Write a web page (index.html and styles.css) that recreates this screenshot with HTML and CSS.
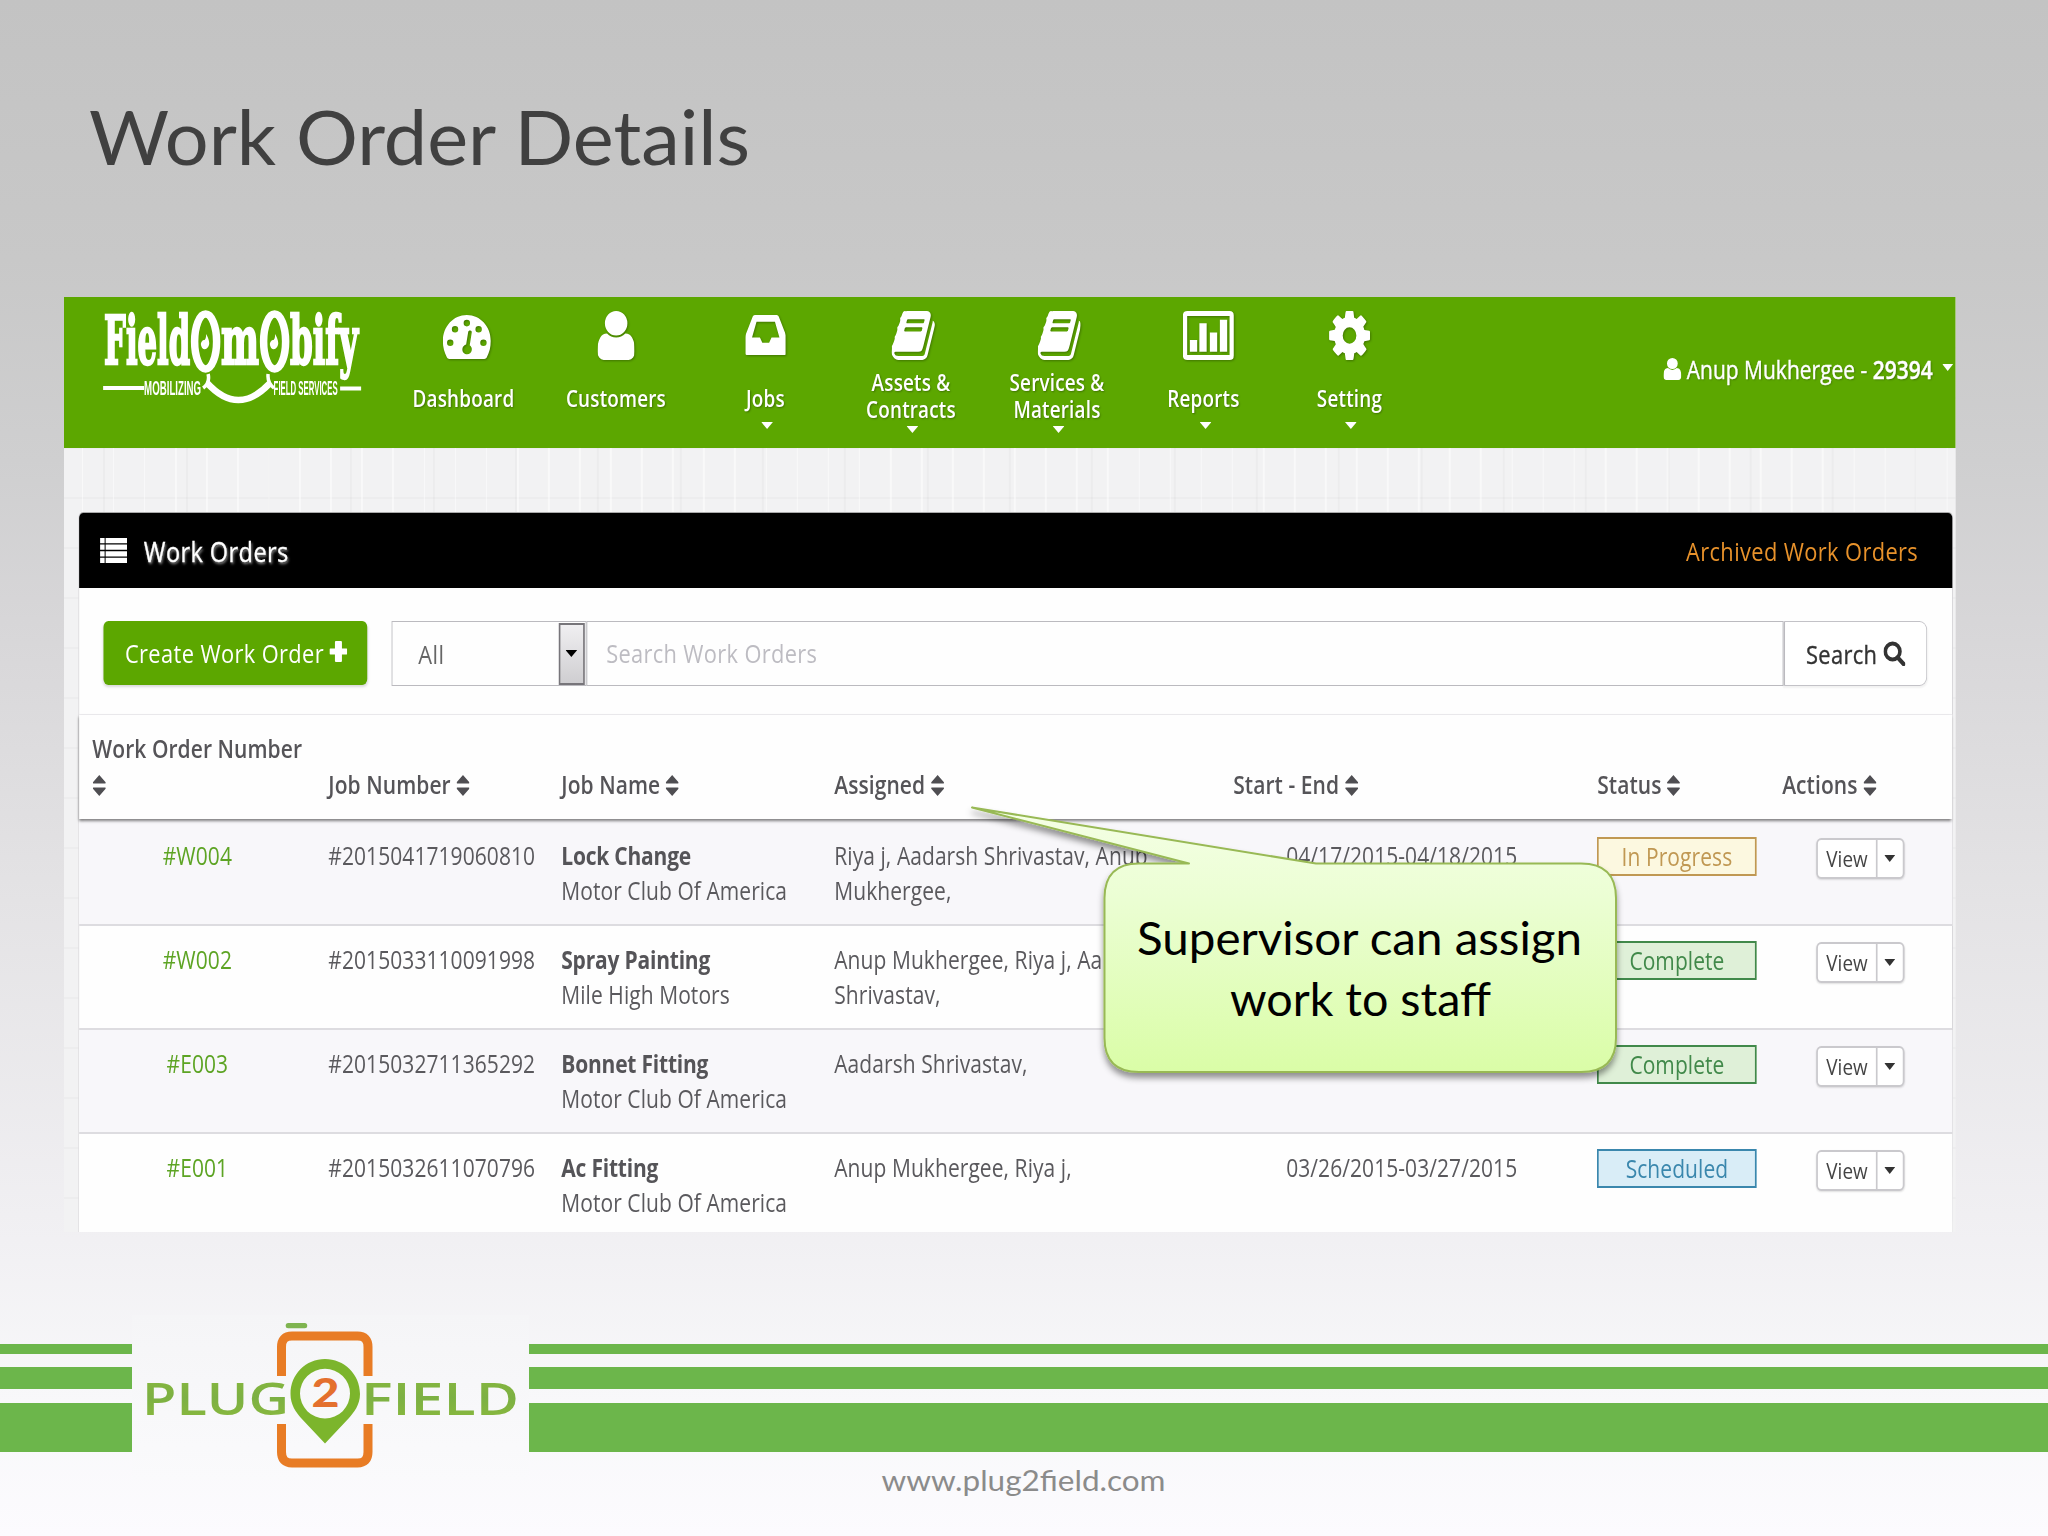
FILE: index.html
```html
<!DOCTYPE html>
<html lang="en">
<head>
<meta charset="utf-8">
<title>Work Order Details</title>
<link rel="stylesheet" href="styles.css">
</head>
<body>
<svg width="0" height="0" class="defs" aria-hidden="true">
  <symbol id="user" viewBox="256 128 1280 1536" preserveAspectRatio="none"><path d="M1536 1399q0 109-62.5 187t-150.5 78h-854q-88 0-150.5-78t-62.5-187q0-85 8.5-160.5t31.5-152 58.5-131 94-89 134.5-34.5q131 128 313 128t313-128q76 0 134.5 34.5t94 89 58.5 131 31.5 152 8.5 160.5zm-256-887q0 159-112.5 271.5t-271.5 112.5-271.5-112.5-112.5-271.5 112.5-271.5 271.5-112.5 271.5 112.5 112.5 271.5z"/></symbol>
  <symbol id="book" viewBox="64 128 1664 1536" preserveAspectRatio="none"><path d="M1703 478q40 57 18 129l-275 906q-19 64-76.5 107.5t-122.5 43.5h-923q-77 0-148.5-53.5t-99.5-131.5q-24-67-2-127 0-4 3-27t4-37q1-8-3-21.5t-3-19.5q2-11 8-21t16.5-23.5 16.5-23.5q23-38 45-91.5t30-91.5q3-10 .5-30t-.5-28q3-11 17-28t17-23q21-36 42-92t25-90q1-9-2.5-32t.5-28q4-13 22-30.5t22-22.5q19-26 42.5-84.5t27.5-96.5q1-8-3-25.5t-2-26.5q2-8 9-18t18-23 17-21q8-12 16.5-30.5t15-35 16-36 19.5-32 26.5-23.5 36-11.5 47.5 5.5l-1 3q38-9 51-9h761q74 0 114 56t18 130l-274 906q-36 119-71.5 153.5t-128.5 34.5h-869q-27 0-38 15-11 16-1 43 24 70 144 70h923q29 0 56-15.5t35-41.5l300-987q7-22 5-57 38 15 59 43zm-1064 2q-4 13 2 22.5t20 9.5h608q13 0 25.5-9.5t16.5-22.5l21-64q4-13-2-22.5t-20-9.5h-608q-13 0-25.5 9.5t-16.5 22.5zm-83 256q-4 13 2 22.5t20 9.5h608q13 0 25.5-9.5t16.5-22.5l21-64q4-13-2-22.5t-20-9.5h-608q-13 0-25.5 9.5t-16.5 22.5z"/></symbol>
  <symbol id="cog" viewBox="128 128 1536 1536" preserveAspectRatio="none"><path d="M1152 896q0-106-75-181t-181-75-181 75-75 181 75 181 181 75 181-75 75-181zm512-109v222q0 12-8 23t-20 13l-185 28q-19 54-39 91 35 50 107 138 10 12 10 25t-9 23q-27 37-99 108t-94 71q-12 0-26-9l-138-108q-44 23-91 38-16 136-29 186-7 28-36 28h-222q-14 0-24.5-8.5t-11.5-21.5l-28-184q-49-16-90-37l-141 107q-10 9-25 9-14 0-25-11-126-114-165-168-7-10-7-23 0-12 8-23 15-21 51-66.5t54-70.5q-27-50-41-99l-183-27q-13-2-21-12.5t-8-23.5v-222q0-12 8-23t19-13l186-28q14-46 39-92-40-57-107-138-10-12-10-24 0-10 9-23 26-36 98.5-107.5t94.5-71.5q13 0 26 10l138 107q44-23 91-38 16-136 29-186 7-28 36-28h222q14 0 24.5 8.5t11.5 21.5l28 184q49 16 90 37l142-107q9-9 24-9 13 0 25 10 129 119 165 170 7 8 7 22 0 12-8 23-15 21-51 66.5t-54 70.5q26 50 41 98l183 28q13 2 21 12.5t8 23.5z"/></symbol>
  <symbol id="gauge" viewBox="0 0 48 44" preserveAspectRatio="none"><path fill-rule="evenodd" d="M24 0C10.500 0 0 11.500 0 26c0 6.200 1.600 11.500 4 16.300.6 1.100 1.400 1.700 2.600 1.700h34.800c1.200 0 2-.6 2.600-1.700 2.400-4.800 4-10.100 4-16.300C48 11.500 37.500 0 24 0zM24 4.800a3.200 3.300 0 1 1 0 6.600 3.200 3.300 0 1 1 0-6.600zM12.200 11a3.200 3.300 0 1 1 0 6.600 3.200 3.300 0 1 1 0-6.600zM35.800 11a3.200 3.300 0 1 1 0 6.600 3.200 3.300 0 1 1 0-6.600zM7.400 24.500a3.200 3.300 0 1 1 0 6.600 3.200 3.300 0 1 1 0-6.600zM40.600 24.500a3.200 3.300 0 1 1 0 6.600 3.200 3.300 0 1 1 0-6.600zM27.400 15.500c1 .1 1.700.9 1.500 2L26.900 30.300c1.600 1.100 2.400 3 2 5-.5 2.700-2.900 4.400-5.500 3.900s-4.300-3.100-3.800-5.800c.4-2 1.900-3.400 3.700-3.900l2.100-12.700c.2-.9 1-1.500 2-1.300z"/></symbol>
  <symbol id="inbox" viewBox="0 0 41 40" preserveAspectRatio="none"><path fill-rule="evenodd" d="M7.500 1.500Q8 0 9.600 0h21.800q1.600 0 2.100 1.500L40.300 19q.7 1.800.7 3.500V38.600q0 1.400-1.300 1.400H1.300Q0 40 0 38.600V22.500Q0 20.800.7 19zM11.300 6.800 6.800 22.500h7.900l2.400 5.300h6.800l2.400-5.300h7.900L29.700 6.800z"/></symbol>
  <symbol id="chart" viewBox="0 0 51 48" preserveAspectRatio="none"><path fill-rule="evenodd" d="M4.500 0h42Q51 0 51 4.500v39q0 4.500-4.500 4.500h-42Q0 48 0 43.500v-39Q0 0 4.500 0zM4.300 4.800v38.400h42.400V4.800zM7 28.500h7.300V40H7zM16.500 12h7.300v28h-7.300zM27 21h7.300v19H27zM37 8.500h7.300V40H37z"/></symbol>
  <symbol id="caret" viewBox="0 0 12 7" preserveAspectRatio="none"><path d="M0 0h12L6 7z"/></symbol>
  <symbol id="sort" viewBox="0 0 14 21" preserveAspectRatio="none"><path d="M7 0 13.600 7.300Q14 8.500 13 8.500H1Q0 8.500.4 7.300zM7 21 .4 13.700Q0 12.500 1 12.500h12q1 0 .6 1.200z"/></symbol>
</svg>

<header class="title">
  <svg width="760" height="160" viewBox="60 60 760 160"><text class="slide-font" x="89" y="165" font-size="75" textLength="661" lengthAdjust="spacingAndGlyphs" fill="#404040">Work Order Details</text></svg>
</header>

<div class="stage">
<main class="app">
  <nav class="navbar">
    <svg class="brand" viewBox="100 305 264 105" preserveAspectRatio="none" fill="#fff">
      <g class="slab" font-size="67" stroke="#fff" stroke-width="2.400">
        <text x="104" y="364" textLength="86" lengthAdjust="spacingAndGlyphs">Field</text>
        <text x="221" y="364" textLength="38" lengthAdjust="spacingAndGlyphs">m</text>
        <text x="290" y="364" textLength="68" lengthAdjust="spacingAndGlyphs">bify</text>
      </g>
      <g fill="none" stroke="#fff" stroke-width="7.500">
        <ellipse cx="205.500" cy="341.500" rx="11" ry="27.500"/>
        <ellipse cx="274.500" cy="341.500" rx="11" ry="27.500"/>
        <path d="M207 383Q238 417 270 383" stroke-width="6.500"/>
        <path d="M208 374Q210 383 203 388M268 374Q267 383 274 388" stroke-width="3.500"/>
      </g>
      <path d="M206 334q5 9 2 13-3 4-6 1-3-5 1-8 3 1 3-6zM275 334q5 9 2 13-3 4-6 1-3-5 1-8 3 1 3-6z"/>
      <path d="M103 386h41v4h-41zM340 386.500h21v4h-21z"/>
      <g class="tag" font-size="21">
        <text x="144" y="395" textLength="57" lengthAdjust="spacingAndGlyphs">MOBILIZING</text>
        <text x="273.500" y="395" textLength="64" lengthAdjust="spacingAndGlyphs">FIELD SERVICES</text>
      </g>
    </svg>
    <ul class="menu">
      <li><svg class="i-gauge"><use href="#gauge"/></svg><span class="label">Dashboard</span></li>
      <li><svg class="i-user"><use href="#user"/></svg><span class="label">Customers</span></li>
      <li><svg class="i-inbox"><use href="#inbox"/></svg><span class="label">Jobs</span><svg class="caret"><use href="#caret"/></svg></li>
      <li class="two"><svg class="i-book"><use href="#book"/></svg><span class="label">Assets &amp;<br>Contracts</span><svg class="caret"><use href="#caret"/></svg></li>
      <li class="two"><svg class="i-book"><use href="#book"/></svg><span class="label">Services &amp;<br>Materials</span><svg class="caret"><use href="#caret"/></svg></li>
      <li><svg class="i-chart"><use href="#chart"/></svg><span class="label">Reports</span><svg class="caret"><use href="#caret"/></svg></li>
      <li><svg class="i-cog"><use href="#cog"/></svg><span class="label">Setting</span><svg class="caret"><use href="#caret"/></svg></li>
    </ul>
    <div class="account"><svg class="i-me"><use href="#user"/></svg><span>Anup Mukhergee - <b>29394</b></span><svg class="caret"><use href="#caret"/></svg></div>
  </nav>

  <section class="panel">
    <div class="panel-head">
      <svg class="i-list" viewBox="0 0 27 25" preserveAspectRatio="none" fill="#fff"><path d="M0 0h4.500v5.200H0zM5.500 0h21.500v5.200H5.500zM0 6.600h4.500v5.200H0zM5.500 6.600h21.500v5.200H5.500zM0 13.200h4.500v5.200H0zM5.500 13.200h21.500v5.200H5.500zM0 19.800h4.500V25H0zM5.500 19.800h21.500V25H5.500z"/></svg>
      <h2>Work Orders</h2>
      <a>Archived Work Orders</a>
    </div>
    <div class="toolbar">
      <button class="create">Create Work Order<svg class="i-plus" viewBox="0 0 18 21" preserveAspectRatio="none" fill="#fff"><path d="M6.500 0h5q1 0 1 1v6.500H17q1 0 1 1v4q0 1-1 1h-4.500V20q0 1-1 1h-5q-1 0-1-1v-6.500H1q-1 0-1-1v-4q0-1 1-1h4.500V1q0-1 1-1z"/></svg></button>
      <div class="select">All<span class="drop"><svg class="caret"><use href="#caret"/></svg></span></div>
      <div class="field">Search Work Orders</div>
      <button class="search">Search<svg class="i-search" viewBox="0 0 24 25" preserveAspectRatio="none"><circle cx="10" cy="10.500" r="8" fill="none" stroke="#333" stroke-width="4"/><path d="M15.500 16.500 22 23" stroke="#333" stroke-width="4.500" stroke-linecap="round"/></svg></button>
    </div>
    <div class="row head">
      <span>Work Order Number <svg class="sort"><use href="#sort"/></svg></span>
      <span>Job Number <svg class="sort"><use href="#sort"/></svg></span>
      <span>Job Name <svg class="sort"><use href="#sort"/></svg></span>
      <span>Assigned <svg class="sort"><use href="#sort"/></svg></span>
      <span>Start - End <svg class="sort"><use href="#sort"/></svg></span>
      <span>Status <svg class="sort"><use href="#sort"/></svg></span>
      <span>Actions <svg class="sort"><use href="#sort"/></svg></span>
    </div>
    <div class="row odd first">
      <a class="num">#W004</a><span>#2015041719060810</span><span><b>Lock Change</b><br>Motor Club Of America</span><span>Riya j, Aadarsh Shrivastav, Anup<br>Mukhergee,</span><span class="date">04/17/2015-04/18/2015</span><span class="badge progress">In Progress</span><span class="view"><i>View</i><svg class="caret"><use href="#caret"/></svg></span>
    </div>
    <div class="row">
      <a class="num">#W002</a><span>#2015033110091998</span><span><b>Spray Painting</b><br>Mile High Motors</span><span>Anup Mukhergee, Riya j, Aa<br>Shrivastav,</span><span class="date"></span><span class="badge complete">Complete</span><span class="view"><i>View</i><svg class="caret"><use href="#caret"/></svg></span>
    </div>
    <div class="row odd">
      <a class="num">#E003</a><span>#2015032711365292</span><span><b>Bonnet Fitting</b><br>Motor Club Of America</span><span>Aadarsh Shrivastav,</span><span class="date"></span><span class="badge complete">Complete</span><span class="view"><i>View</i><svg class="caret"><use href="#caret"/></svg></span>
    </div>
    <div class="row last">
      <a class="num">#E001</a><span>#2015032611070796</span><span><b>Ac Fitting</b><br>Motor Club Of America</span><span>Anup Mukhergee, Riya j,</span><span class="date">03/26/2015-03/27/2015</span><span class="badge scheduled">Scheduled</span><span class="view"><i>View</i><svg class="caret"><use href="#caret"/></svg></span>
    </div>
  </section>
</main>
</div>

<svg class="callout" viewBox="960 795 680 300">
  <defs>
    <linearGradient id="lime" gradientUnits="userSpaceOnUse" x1="0" y1="807" x2="0" y2="1072"><stop offset="0" stop-color="#f5ffe6"/><stop offset=".35" stop-color="#ebfed3"/><stop offset="1" stop-color="#dafda7"/></linearGradient>
    <filter id="drop" x="-5%" y="-5%" width="112%" height="115%"><feDropShadow dx="0" dy="5" stdDeviation="3" flood-color="#000" flood-opacity=".42"/></filter>
  </defs>
  <path filter="url(#drop)" fill="url(#lime)" stroke="#98b954" stroke-width="2" stroke-linejoin="round" d="M972 807.500 1316 863.500H1581Q1616 863.500 1616 898V1038Q1616 1072 1581 1072H1139Q1104.500 1072 1104.500 1038V898Q1104.500 863.500 1139 863.500H1189z"/>
  <g class="slide-font" font-size="46">
    <text x="1137" y="954.500" textLength="445" lengthAdjust="spacingAndGlyphs">Supervisor can assign</text>
    <text x="1230" y="1016" textLength="261" lengthAdjust="spacingAndGlyphs">work to staff</text>
  </g>
</svg>

<footer class="footer">
  <div class="bands">
    <div class="stripes"><i></i><i></i><i></i></div>
    <svg class="logo" viewBox="132 1315 397 165">
      <defs><linearGradient id="leaf" x1="0" y1="0" x2="0" y2="1"><stop offset="0" stop-color="#8cbb3c"/><stop offset=".5" stop-color="#7cb043"/><stop offset="1" stop-color="#8cbb3c"/></linearGradient></defs>
      <rect x="285.700" y="1323" width="21.500" height="5.200" rx="2.500" fill="#7fb450"/>
      <path fill="none" stroke="#e87c25" stroke-width="9" d="M281.500 1376V1347Q281.500 1336 292 1336H357.500Q368 1336 368 1347V1376M281.500 1424V1452Q281.500 1463 292 1463H357.500Q368 1463 368 1452V1424"/>
      <path fill="#7cb52c" fill-rule="evenodd" d="M325 1359C306 1359 290.500 1374 290.500 1394 290.500 1405 296 1412 301 1418L325 1443.500 349 1418C354 1412 360 1405 360 1394 360 1374 344 1359 325 1359zM325 1368.800a25 24.800 0 1 0 0 49.600 25 24.800 0 1 0 0-49.600z"/>
      <g class="plug" fill="url(#leaf)" font-size="44.500">
        <text x="142" y="1414.500" textLength="147" lengthAdjust="spacingAndGlyphs">PLUG</text>
        <text x="361" y="1414.500" textLength="158" lengthAdjust="spacingAndGlyphs">FIELD</text>
      </g>
      <text class="two-mark" x="311.500" y="1407" font-size="40" textLength="28" lengthAdjust="spacingAndGlyphs" fill="#e4702e">2</text>
    </svg>
    <div class="stripes"><i></i><i></i><i></i></div>
  </div>
  <svg class="site" width="400" height="70" viewBox="840 1460 400 70"><text class="slide-font" x="881.500" y="1490.500" font-size="29" textLength="284" lengthAdjust="spacingAndGlyphs" fill="#8b8b8b">www.plug2field.com</text></svg>
</footer>
</body>
</html>
```
FILE: styles.css
```css
:root { --k: .84; }
* { box-sizing: border-box; }
body {
  position: relative;
  width: 2048px; height: 1536px; margin: 0; overflow: hidden;
  background: linear-gradient(#c3c3c3 0, #c8c8c8 260px, #cfcfd0 460px, #d7d6d8 620px, #e4e3e5 900px, #f1f0f3 1240px, #f8f8fa 1400px, #fcfbfe 1536px);
  font-family: "Open Sans", sans-serif;
}
.defs { display: block; position: absolute; }
.slide-font { font-family: Lato, sans-serif; }
.title { height: 297px; padding: 60px 0 0 60px; }
.title svg { display: block; }
svg { flex: none; }

/* The application is laid out at full width, then squeezed horizontally */
.stage { width: 1892px; height: 935px; margin-left: 64px; overflow: hidden; }
.app {
  width: calc(1892px / var(--k)); height: 935px;
  transform: scaleX(var(--k)); transform-origin: 0 0;
  overflow: hidden;
  background:
    repeating-linear-gradient(90deg, transparent 0 47px, rgba(0,0,0,.022) 47px 49px, transparent 49px 98px),
    repeating-linear-gradient(90deg, transparent 0 21px, rgba(255,255,255,.5) 21px 23px, transparent 23px 37px),
    repeating-linear-gradient(0deg, transparent 0 33px, rgba(0,0,0,.02) 33px 35px, transparent 35px 50px),
    #f2f2f3;
}
.navbar {
  display: flex; height: 151px; background: #5ca700; color: #fff; fill: #fff;
}
.brand { overflow: visible; width: calc(264px / var(--k)); height: 105px; margin: 8px calc(24px / var(--k)) 0 calc(36px / var(--k)); }
.slab { font-family: "DejaVu Serif Condensed", "DejaVu Serif", serif; font-weight: 700; }
.tag { font-family: "Liberation Sans", sans-serif; font-weight: 700; }
.menu {
  display: grid; grid-template-columns: 151fr 154fr 145fr 146fr 146fr 147fr 145fr;
  width: calc(1034px / var(--k)); margin: 0; padding: 0; list-style: none;
}
.menu li { display: flex; flex-direction: column; align-items: center; padding-top: 14px; }
.menu li > svg:first-child { filter: drop-shadow(1px 1px 1px rgba(0,0,0,.3)); }
.label {
  margin-top: 26px; font-size: 22.5px; font-weight: 600; line-height: 26.500px; text-align: center; letter-spacing: .2px;
  text-shadow: 1px 1px 2px rgba(0,0,0,.3); white-space: nowrap;
}
.two .label { margin-top: 10px; }
.caret { width: 14px; height: 7px; }
.menu .caret { margin: 9px 0 0 4px; }
.menu .two .caret { margin-top: 3px; }
.i-gauge { width: calc(48px / var(--k)); height: 44px; margin: 4px 0 1px 9px; }
.i-user { width: calc(37.5px / var(--k)); height: 49px; }
.i-inbox { width: calc(41px / var(--k)); height: 40px; margin: 4px 0 5px; }
.i-book { width: calc(43.5px / var(--k)); height: 49px; margin-left: 5px; }
.i-chart { width: calc(51px / var(--k)); height: 49px; margin-left: 12px; }
.i-cog { width: calc(41px / var(--k)); height: 49px; }
.account {
  display: flex; align-items: center; margin-left: auto; padding: 0 calc(3px / var(--k)) 8px 0;
  font-size: 25px; white-space: nowrap; text-shadow: 1px 1px 2px rgba(0,0,0,.3); -webkit-text-stroke: .4px #fff;
}
.account b { font-weight: 600; }
.account .caret { margin: -2px 0 0 11px; width: 13px; }
.i-me { width: calc(18px / var(--k)); height: 22px; margin-right: 6px; }

.panel {
  width: calc(1875px / var(--k)); height: 721px;
  margin: 64px 0 0 calc(14px / var(--k));
  border: 1px solid #c9c8cc; border-top-color: #aaa; border-bottom: 0;
  border-radius: 6px 6px 0 0; background: #fefefe;
}
.panel-head {
  display: flex; align-items: center; height: 75px; padding: 0 calc(34px / var(--k)) 0 calc(21px / var(--k));
  border-radius: 5px 5px 0 0; background: #000; color: #fff;
}
.i-list { width: calc(27px / var(--k)); height: 25px; }
h2 { margin: 0 auto 0 calc(17px / var(--k)); font-size: 28px; font-weight: 400; letter-spacing: .5px; text-shadow: 1px 2px 3px rgba(255,255,255,.6); -webkit-text-stroke: .3px #fff; }
.panel-head a { color: #e8922b; font-size: 26px; letter-spacing: .45px; }
.toolbar {
  display: flex; align-items: flex-start; height: 127px; padding: 33px calc(25px / var(--k)) 0;
  border-bottom: 1px solid #eeedf0;
}
button { font-family: inherit; font-size: 26px; letter-spacing: .45px; }
.create {
  display: flex; align-items: center; justify-content: center; height: 64px;
  width: calc(263.500px / var(--k)); margin-right: calc(24px / var(--k)); padding: 0 0 0 1px;
  border: 0; border-radius: 6px; background: #5ca700; color: #fff; box-shadow: 0 2px 3px rgba(0,0,0,.15);
}
.i-plus { width: calc(18px / var(--k)); height: 21px; margin: -4px 0 0 6px; }
.select {
  display: flex; align-items: center; justify-content: space-between; height: 65px;
  width: calc(195px / var(--k)); padding: 0 1px 0 calc(26px / var(--k));
  border: 1px solid #bbbabf; color: #666; font-size: 26px; line-height: 66px; letter-spacing: .6px;
}
.drop {
  display: flex; align-items: center; justify-content: center; width: calc(26px / var(--k)); height: 62px;
  border: 2px solid #77757a; background: linear-gradient(#f0eff1, #cfced1); fill: #000;
}
.field {
  flex: 1; height: 65px; padding-left: calc(19px / var(--k)); border: 1px solid #bbbabf;
  color: #bdbcc2; font-size: 26px; line-height: 63px; letter-spacing: .4px;
}
.search {
  display: flex; align-items: center; justify-content: center; height: 65px; width: calc(144px / var(--k)); padding: 0;
  border: 1px solid #c3c2c7; border-left: 2px solid #bbbabf; border-radius: 0 9px 9px 0; background: #fff; color: #333;
  box-shadow: 0 2px 2px rgba(0,0,0,.05); -webkit-text-stroke: .4px #333;
}
.i-search { width: calc(22px / var(--k)); height: 25px; margin-left: 7px; }

.row {
  display: grid; grid-template-columns: 236fr 233fr 273fr 399fr 364fr 185fr 170fr; align-items: start;
  height: 104px; padding: 16px 0 0 calc(13.500px / var(--k));
  border-bottom: 2px solid #dddce0; color: #5a595d; font-size: 25px; line-height: 35.300px; letter-spacing: .08px; white-space: nowrap;
}
.row b { font-weight: 700; color: #555458; letter-spacing: -.25px; }
.head {
  position: relative; height: 104px; align-items: end; padding: 0 0 17px calc(13.500px / var(--k)); border-bottom: 0;
  background: #fefefe; box-shadow: 0 2px 3px rgba(0,0,0,.5); color: #555458; font-weight: 600;
}
.head span:first-child { white-space: normal; width: 260px; }
.sort { width: 16px; height: 21px; margin-left: 0; vertical-align: -2px; fill: #4f4e52; }
.odd { background: #f8f7fa; }
.first { height: 107px; padding-top: 19px; }
.last { border: 0; background: #fefefe; }
.num { text-align: center; color: #5da424; padding-right: calc(26px / var(--k)); }
.date { text-align: center; padding-right: calc(27px / var(--k)); }
.badge {
  width: calc(159.500px / var(--k)); height: 39px; margin-top: -1px; border: 2px solid; text-align: center; line-height: 35px; font-size: 25px;
}
.progress { color: #c09853; background: #fcf8e0; }
.complete { color: #41894a; background: #dff0d8; }
.scheduled { color: #3a87ad; background: #d9edf7; }
.view {
  display: flex; align-items: center; width: calc(88px / var(--k)); height: 41px; margin: 0 0 0 calc(34px / var(--k));
  border: 2px solid #cac9cd; border-radius: 6px; background: #fff; color: #444; fill: #333;
  font-size: 22.500px; line-height: 38px; box-shadow: 0 1px 2px rgba(0,0,0,.12);
}
.view i { width: calc(60px / var(--k)); font-style: normal; text-align: center; border-right: 2px solid #cac9cd; }
.view .caret { width: 13px; margin: 0 auto; }

.callout { position: absolute; left: 960px; top: 795px; width: 680px; height: 300px; }

.footer { height: 304px; padding-top: 83px; }
.bands { display: grid; grid-template-columns: 132px 397px 1fr; height: 165px; }
.logo { width: 397px; height: 165px; background: linear-gradient(#f5f5f7, #fafafc); }
.stripes { display: grid; grid-template-rows: 10px 22.500px 50.500px; row-gap: 12.500px; padding-top: 29px; align-content: start; }
.stripes i { background: #6cb64b; }
.stripes i:last-child { margin-top: 1px; }
.plug { font-family: "Open Sans", sans-serif; font-weight: 600; }
.two-mark { font-family: Lato, sans-serif; font-weight: 900; }
.site { display: block; margin: -20px auto 0 840px; }
```
